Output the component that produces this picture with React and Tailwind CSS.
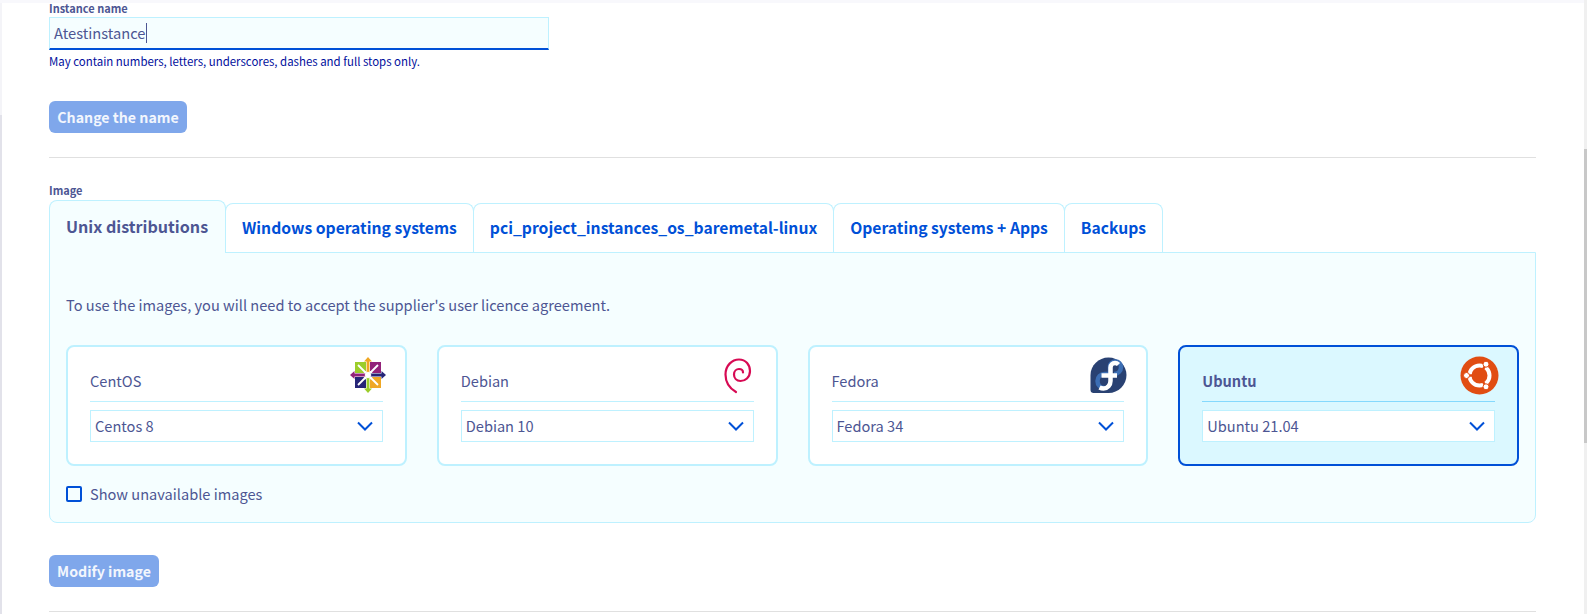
import React from "react";

const font = "font-['Noto_Sans_CJK_SC','Liberation_Sans',sans-serif]";

function CentosLogo() {
  return (
    <svg width="36" height="36" viewBox="0 0 36 36">
      <path d="M5 5h11v9l-2.500 2H5z" fill="#9ccd2a" />
      <path d="M20 5h11v11h-8.500L20 13.500z" fill="#932279" />
      <path d="M5 20h8.500l2.500 2.500V31H5z" fill="#262577" />
      <path d="M20 22.500l2.500-2.500H31v11H20z" fill="#efa724" />
      <path d="M18 0l-4 4.500h2.600v11h2.800v-11H22z" fill="#efa724" />
      <path d="M18 36l-4-4.500h2.600v-11h2.800v11H22z" fill="#9ccd2a" />
      <path d="M0 18l4.500-4v2.600h11v2.800h-11V22z" fill="#932279" />
      <path d="M36 18l-4.500-4v2.600h-11v2.800h11V22z" fill="#262577" />
      <path d="M8 8l8 8M28 8l-8 8M8 28l8-8M28 28l-8-8" stroke="#fff" strokeWidth="1.800" />
      <rect x="15.500" y="15.500" width="5" height="5" fill="#fff" transform="rotate(45 18 18)" />
    </svg>
  );
}

function DebianLogo() {
  return (
    <svg width="36" height="40" viewBox="2 0 36 40" fill="none" className="overflow-visible">
      <path
        d="M17 37C10 33 6.500 26 6.500 19.500C6.500 10.500 13 4.500 20 4.500C27 4.500 31 10 31 16C31 22.500 26 26 21.500 26C17.500 26 15 23 15 19.500C15 16 17.500 14 20 14C22.500 14 24 15.500 24 17.500"
        stroke="#d70a53"
        strokeWidth="2.200"
        strokeLinecap="round"
      />
    </svg>
  );
}

function FedoraLogo() {
  return (
    <svg width="37" height="36" viewBox="1 0 37 36" fill="none" className="overflow-visible">
      <path d="M18.500 0.500C28.400 0.500 36.500 8.500 36.500 18C36.500 27.900 28.400 36 18.500 36H3.500C1.800 36 0.500 34.700 0.500 33V18C0.500 8.500 8.600 0.500 18.500 0.500Z" fill="#294172" />
      <path d="M21 17H14.500C10.500 17 7.500 20 7.500 24C7.500 28 10.500 31 14.500 31" stroke="#3c6eb4" strokeWidth="4.500" />
      <path d="M20 17V9.500C20 6.500 22.500 4.500 25.500 4.500C28.500 4.500 31 7 31 10C31 14 28 17 24 17" stroke="#3c6eb4" strokeWidth="4.500" />
      <path d="M28.500 7.500C27.500 6.500 26.500 6 25 6C22.500 6 20.500 8 20.500 10.500V24C20.500 28 17.500 31.500 13.500 31.500C12 31.500 10.500 31 9.500 30.500" stroke="#fff" strokeWidth="4.500" />
      <path d="M11.500 18.500H27" stroke="#fff" strokeWidth="4.500" />
    </svg>
  );
}

function UbuntuLogo() {
  return (
    <svg width="39" height="39" viewBox="1 0 39 39" fill="none" className="overflow-visible">
      <circle cx="19.500" cy="19.500" r="19" fill="#e14d12" />
      <circle cx="19.500" cy="19.500" r="10" stroke="#fff" strokeWidth="4" />
      <path d="M19.500 19.500L3 19.500M19.500 19.500L28 4.500M19.500 19.500L28 34.500" stroke="#e14d12" strokeWidth="2.500" />
      <circle cx="6.500" cy="19.500" r="3" fill="#fff" stroke="#e14d12" strokeWidth="1" />
      <circle cx="26" cy="8.200" r="3" fill="#fff" stroke="#e14d12" strokeWidth="1" />
      <circle cx="26" cy="30.800" r="3" fill="#fff" stroke="#e14d12" strokeWidth="1" />
    </svg>
  );
}

function Chevron() {
  return (
    <svg width="16" height="10" viewBox="0 0 16 10" fill="none">
      <path d="M1 1.500L8 8.500L15 1.500" stroke="#0050d7" strokeWidth="2" />
    </svg>
  );
}

const tabs = [
  "Windows operating systems",
  "pci_project_instances_os_baremetal-linux",
  "Operating systems + Apps",
  "Backups",
];

const images = [
  { name: "CentOS", version: "Centos 8", logo: <CentosLogo /> },
  { name: "Debian", version: "Debian 10", logo: <DebianLogo /> },
  { name: "Fedora", version: "Fedora 34", logo: <FedoraLogo /> },
  { name: "Ubuntu", version: "Ubuntu 21.04", logo: <UbuntuLogo />, selected: true },
];

function ImageCard({ image }) {
  return (
    <div
      className={`flex-1 h-[121px] rounded-lg border-2 px-[22px] ${
        image.selected ? "border-[#0050d7] bg-[#dbf8ff]" : "border-[#bef1ff] bg-white"
      }`}
    >
      <div
        className={`relative h-[55px] border-b flex items-center pt-[14px] ${
          image.selected ? "border-[#85d9fd]" : "border-[#bef1ff]"
        }`}
      >
        <span className={`text-[14.6px] leading-5 ${image.selected ? "font-bold" : ""}`}>{image.name}</span>
        <div className="absolute right-[-5px] top-[10px] h-[36px] w-[40px] flex items-center justify-center">
          {image.logo}
        </div>
      </div>
      <div className="mt-[8px] h-[32px] border border-[#bef1ff] bg-white flex items-center justify-between pl-[4px] pr-[9px]">
        <span className="text-[14.6px] leading-5">{image.version}</span>
        <Chevron />
      </div>
    </div>
  );
}

export default function App() {
  return (
    <div className={`${font} relative h-[614px] overflow-hidden bg-white text-[#4d5693]`}>
      <div className="h-[3px] bg-[#f8f8fc]" />
      <div className="pl-[49px] pr-[51px]">
        <label className="block text-[11px] leading-[14px] font-bold -mt-[2px] h-[16px]">Instance name</label>
        <div className="w-[500px] h-[33px] border border-[#bef1ff] border-b-2 border-b-[#0050d7] bg-[#f5feff] flex items-center pl-[4px] text-[14.7px]">
          <span>Atestinstance</span>
          <span className="w-px h-[20px] bg-[#4d5693]" />
        </div>
        <p className="mt-[3px] text-[11.45px] leading-[16px] text-[#000e9c]">
          May contain numbers, letters, underscores, dashes and full stops only.
        </p>
        <button className="mt-[32px] block w-[138px] h-[32px] rounded-md bg-[#7fa7eb] text-[14.2px] leading-5 font-semibold text-[#f2f6fd]">
          Change the name
        </button>
        <hr className="mt-[24px] border-[#e0e0e0]" />

        <label className="block mt-[25px] text-[11px] leading-[14px] font-bold">Image</label>
        <div className="mt-[2px] flex items-end h-[53px]">
          <div className="relative z-10 w-[177px] h-[53px] -mb-px rounded-t-lg border border-b-0 border-[#bef1ff] bg-[#f5feff] pl-[16px] pt-[13px] text-[16.1px] leading-6 font-bold">
            Unix distributions
          </div>
          {tabs.map((tab) => (
            <div
              key={tab}
              className="h-[49px] -ml-px first:ml-0 rounded-t-lg border border-b-0 border-[#bef1ff] bg-white px-[16px] pt-[12px] text-[15.68px] leading-6 font-semibold text-[#0050d7]"
            >
              {tab}
            </div>
          ))}
        </div>
        <div className="h-[271px] rounded-b-lg border border-[#bef1ff] bg-[#f5feff] px-[16px] pt-[42px]">
          <p className="text-[14.6px] leading-5">To use the images, you will need to accept the supplier's user licence agreement.</p>
          <div className="mt-[30px] flex gap-[30px]">
            {images.map((image) => (
              <ImageCard key={image.name} image={image} />
            ))}
          </div>
          <label className="mt-[18px] flex items-center gap-2">
            <span className="w-4 h-4 rounded-[2px] border-2 border-[#0050d7]" />
            <span className="text-[14.6px] leading-5">Show unavailable images</span>
          </label>
        </div>
        <button className="mt-[32px] block w-[110px] h-[32px] rounded-md bg-[#7fa7eb] text-[14.2px] leading-5 font-semibold text-[#f2f6fd]">
          Modify image
        </button>
        <hr className="mt-[24px] border-[#e0e0e0]" />
      </div>

      <div className="absolute left-0 top-[3px] h-[112px] w-[2px] bg-[#f4f4f8]" />
      <div className="absolute left-0 top-[115px] bottom-0 w-[2px] bg-[#e2e2ea]" />
      <div className="absolute right-0 top-0 bottom-0 w-[3px] bg-[#f0f0f0]">
        <div className="mt-[149px] h-[294px] bg-[#c8c8c8]" />
      </div>
    </div>
  );
}
